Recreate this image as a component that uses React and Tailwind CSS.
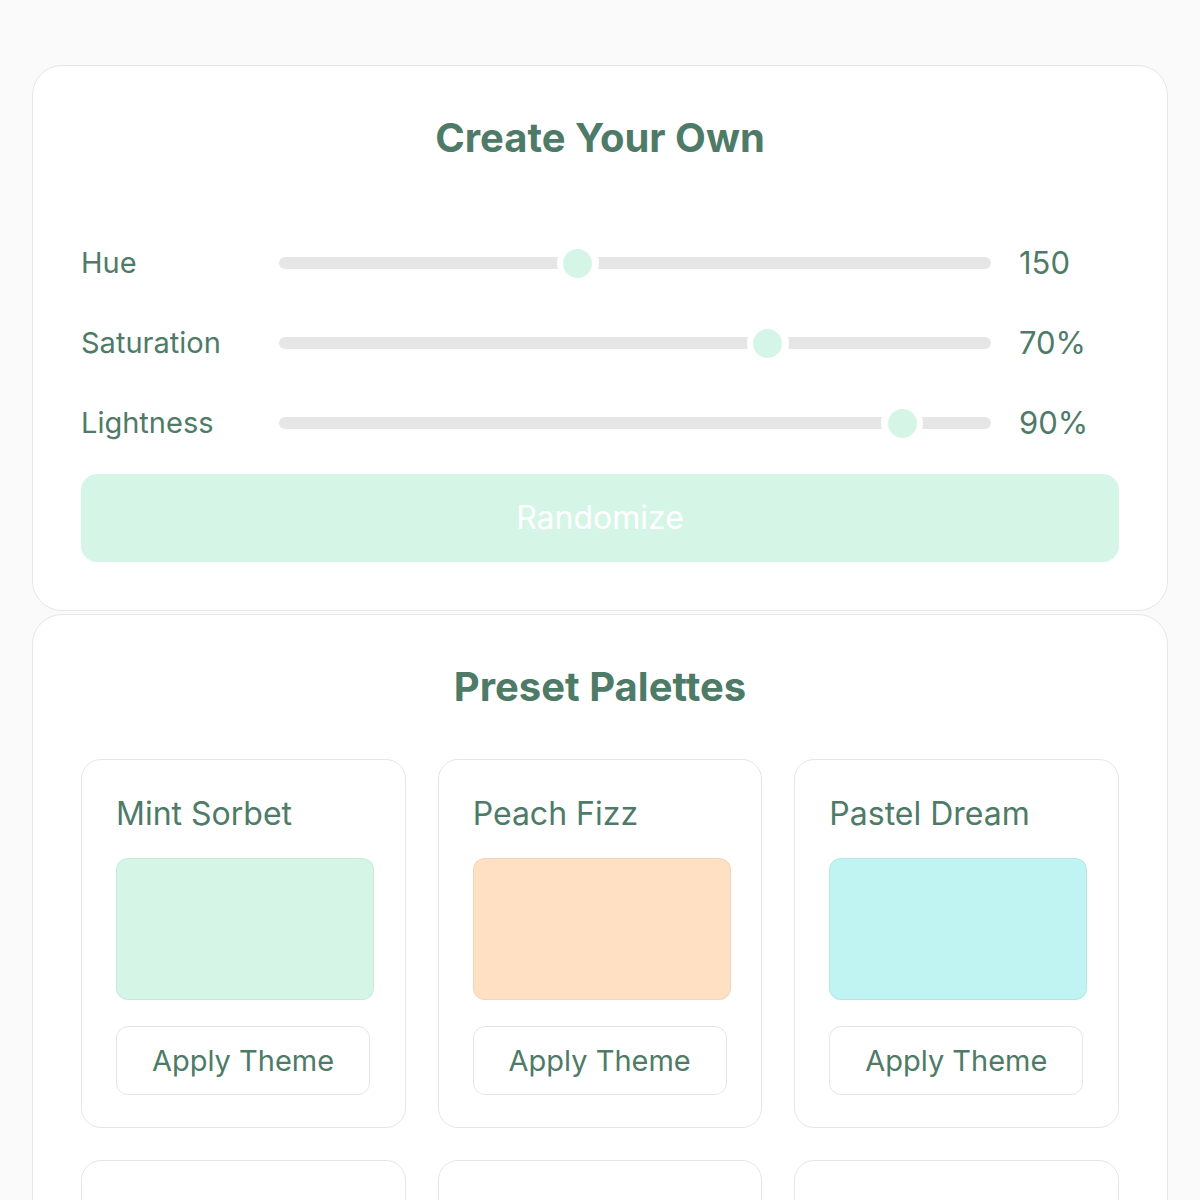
import React from "react";

const sliders = [
  { label: "Hue", frac: 150 / 360, display: "150" },
  { label: "Saturation", frac: 0.695, display: "70%" },
  { label: "Lightness", frac: 0.892, display: "90%" },
];

const palettes = [
  { name: "Mint Sorbet", color: "bg-[#d5f6e7]" },
  { name: "Peach Fizz", color: "bg-[#ffe0c2]" },
  { name: "Pastel Dream", color: "bg-[#bff4f3]" },
  { name: "Lavender Haze", color: "bg-[#e6dcfa]" },
  { name: "Lemon Drop", color: "bg-[#fff5c2]" },
  { name: "Rose Petal", color: "bg-[#fbd9e2]" },
];

function Slider({ frac }) {
  const left = 14 + frac * (711 - 28);
  return (
    <div className="relative h-10 flex items-center">
      <div className="w-full h-3 rounded-full bg-[#e6e6e6]" />
      <div
        className="absolute top-1/2 -translate-x-1/2 -translate-y-1/2 w-[42px] h-[42px] rounded-full bg-white flex items-center justify-center"
        style={{ left: `${left}px` }}
      >
        <div className="w-[29px] h-[29px] rounded-full bg-[#d5f6e7]" />
      </div>
    </div>
  );
}

export default function App() {
  return (
    <div
      className="min-h-[1200px] bg-[#fafafa] px-8 pt-[65px] text-[#4e7b67]"
      style={{ fontFamily: "Inter, 'Noto Sans', sans-serif" }}
    >
      <div className="bg-white border border-[#e6e6e6] rounded-[30px] px-12 pt-12 pb-12">
        <h2 className="text-[40px] leading-12 font-bold text-center">Create Your Own</h2>
        <div className="mt-[81px] flex flex-col gap-10">
          {sliders.map((s) => (
            <div key={s.label} className="grid grid-cols-[170px_1fr_100px] gap-[28px] items-center">
              <div className="text-[29px] leading-10">{s.label}</div>
              <Slider frac={s.frac} />
              <div className="text-[31px] leading-10">{s.display}</div>
            </div>
          ))}
        </div>
        <button className="mt-[31px] w-full h-[88px] rounded-2xl bg-[#d5f6e7] text-white text-[32px]">
          Randomize
        </button>
      </div>
      <div className="mt-[3px] bg-white border border-[#e6e6e6] rounded-[30px] px-12 pt-12 pb-12">
        <h2 className="text-[40px] leading-12 font-bold text-center">Preset Palettes</h2>
        <div className="mt-12 grid grid-cols-3 gap-8">
          {palettes.map((p) => (
            <div key={p.name} className="border border-[#e6e6e6] rounded-[20px] pl-[34px] pr-6 pt-[33px] pb-8">
              <div className="text-[32px] leading-[42px]">{p.name}</div>
              <div className={`mt-[23px] h-[142px] w-[258px] rounded-xl border border-black/5 ${p.color}`} />
              <button className="mt-[26px] w-[254px] h-[69px] rounded-xl border border-[#e6e6e6] bg-white text-[29px]">
                Apply Theme
              </button>
            </div>
          ))}
        </div>
      </div>
    </div>
  );
}
